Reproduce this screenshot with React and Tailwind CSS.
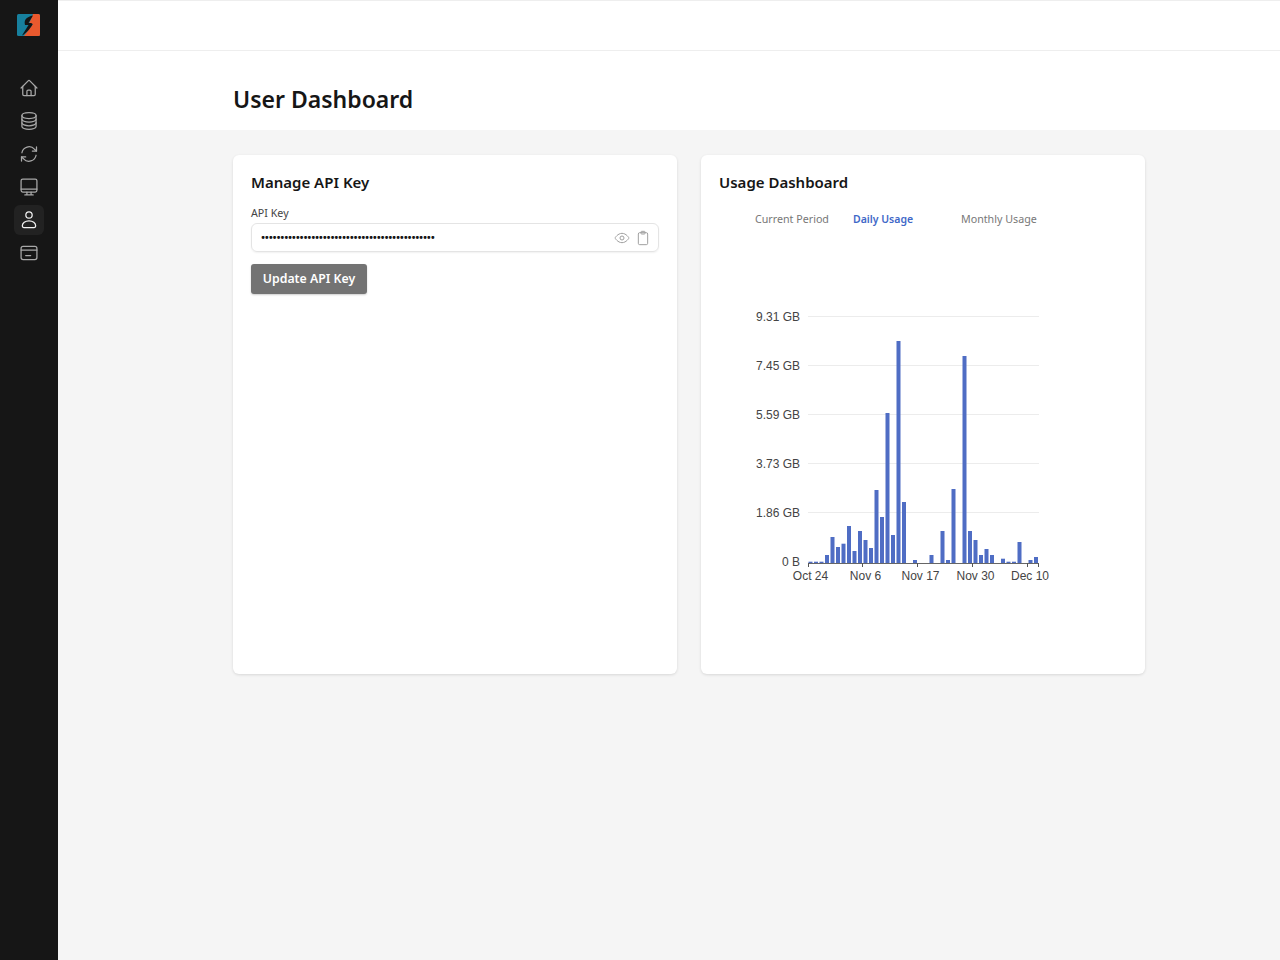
import React from "react";

const tops = [561.7,561.7,561.7,555,537,547,543.7,526,551,531,540,548,490,517,413,535,341,502,null,560,null,null,555,null,531,560,489,null,356,531,540,555,549,555,null,558.7,561.7,561.7,542,null,560,557];
const gridY = [316.5, 365.5, 414.5, 463.5, 512.5];
const yLabels = [["9.31 GB",320.5],["7.45 GB",369.5],["5.59 GB",418.5],["3.73 GB",467.5],["1.86 GB",516.5],["0 B",566]];
const xLabels = [["Oct 24",810.5],["Nov 6",865.5],["Nov 17",920.5],["Nov 30",975.5],["Dec 10",1030]];
const ticks = [808.5, 862.5, 917.5, 972.5, 1027.5, 1038.5];

function Chart() {
  return (
    <svg width="1280" height="960" viewBox="0 0 1280 960" className="absolute left-[-701px] top-[-155px] pointer-events-none">
      {gridY.map((y) => <line key={y} x1="808" x2="1039" y1={y} y2={y} stroke="#ececec" strokeWidth="1" />)}
      {tops.map((t, i) => t === null ? null : (
        <rect key={i} x={808.5 + 5.5 * i} y={t} width="4" height={563 - t} fill="#4f6dc4" />
      ))}
      <line x1="808" x2="1039" y1="563.5" y2="563.5" stroke="#666" strokeWidth="1" />
      {ticks.map((x) => <line key={x} x1={x} x2={x} y1="563" y2="567" stroke="#555" strokeWidth="1" />)}
      {yLabels.map(([t, y]) => <text key={t} x="800" y={y} textAnchor="end" fontFamily="Liberation Sans, Arial, sans-serif" fontSize="12" fill="#444">{t}</text>)}
      {xLabels.map(([t, x]) => <text key={t} x={x} y="580" textAnchor="middle" fontFamily="Liberation Sans, Arial, sans-serif" fontSize="12" fill="#444">{t}</text>)}
    </svg>
  );
}

const S = ({ children, active }) => (
  <svg width="20" height="20" viewBox="0 0 24 24" fill="none" stroke={active ? "#f2f2f2" : "#a8a8a8"} strokeWidth="1.5" strokeLinecap="round" strokeLinejoin="round">{children}</svg>
);

const Home = () => <S><path d="M2.5 12 11 3.4a1.4 1.4 0 0 1 2 0l8.5 8.6" /><path d="M4.5 10v9.5A1.5 1.5 0 0 0 6 21h12a1.5 1.5 0 0 0 1.5-1.5V10" /><path d="M9.5 21v-5a1.5 1.5 0 0 1 1.5-1.5h2a1.5 1.5 0 0 1 1.5 1.5v5" /></S>;
const Db = () => <S><ellipse cx="12" cy="5.5" rx="8.5" ry="3.5" /><path d="M3.5 5.5v13c0 1.9 3.8 3.5 8.5 3.5s8.5-1.6 8.5-3.5v-13" /><path d="M3.5 9.8c0 1.9 3.8 3.5 8.5 3.5s8.5-1.6 8.5-3.5" /><path d="M3.5 14.2c0 1.9 3.8 3.5 8.5 3.5s8.5-1.6 8.5-3.5" /></S>;
const Sync = () => <S><path d="M3.5 10.5a8.7 8.7 0 0 1 15-4.3L21 8.5" /><path d="M21 3.5v5h-5" /><path d="M20.5 13.5a8.7 8.7 0 0 1-15 4.3L3 15.5" /><path d="M3 20.5v-5h5" /></S>;
const Monitor = () => <S><rect x="2.5" y="2.5" width="19" height="15.5" rx="2" /><path d="M2.5 14.5h19" /><path d="M9.5 18v3.5M14.5 18v3.5M7 21.5h10" /></S>;
const User = () => <S active><circle cx="12" cy="6" r="3.8" /><path d="M12 13c-4.6 0-8 2.6-8 6v.3c0 1 .8 1.7 1.7 1.7h12.6c.9 0 1.7-.7 1.7-1.7V19c0-3.4-3.4-6-8-6Z" /></S>;
const Card = () => <S><rect x="2.5" y="4" width="19" height="16" rx="2.5" /><path d="M2.5 8.5h19" /><path d="M8 15h6" /></S>;

function Logo() {
  return (
    <svg width="23" height="22" viewBox="0 0 23 22" className="mr-[1px]">
      <rect width="23" height="22" rx="1.5" fill="#17809e" />
      <path d="M16 0H21.5A1.5 1.5 0 0 1 23 1.5V20.5A1.5 1.5 0 0 1 21.5 22H7L16 10H12Z" fill="#e9592e" />
      <path d="M16 1.5C13 2 10 3.5 8.5 5.5C7.5 7 7.5 9 8 11H11.5L5 21.5C9 19.5 13 15 15.5 10.5C15.5 10 15 9 14 9H11.5Z" fill="#141414" />
    </svg>
  );
}

const nav = [Home, Db, Sync, Monitor, User, Card];

export default function App() {
  return (
    <div className="flex min-h-[960px] bg-[#f5f5f5] font-['Noto_Sans','Open_Sans',sans-serif] text-[#161616]">
      <aside className="w-[58px] shrink-0 bg-[#161616] flex flex-col items-center pt-[14px]">
        <Logo />
        <nav className="mt-[37px] flex flex-col gap-[3px]">
          {nav.map((I, i) => (
            <div key={i} className={`w-[30px] h-[30px] flex items-center justify-center rounded-md ${i === 4 ? "bg-[#222222]" : ""}`}>
              <I />
            </div>
          ))}
        </nav>
      </aside>
      <main className="flex-1 min-w-0">
        <div className="h-[51px] bg-white border-b border-t border-[#eeeeee]" />
        <div className="h-[79px] bg-white pl-[175px] pt-[32px]">
          <h1 className="text-[23px] leading-[32px] font-semibold">User Dashboard</h1>
        </div>
        <div className="pl-[175px] pt-[25px] flex gap-[24px]">
          <section className="w-[444px] h-[519px] bg-white rounded-md shadow-[0_1px_3px_rgba(0,0,0,0.12)] px-[18px] pt-[17px]">
            <h2 className="text-[15px] leading-[20px] font-semibold">Manage API Key</h2>
            <div className="mt-[13px] text-[10.7px] leading-[16px] text-[#444]">API Key</div>
            <div className="mt-[2px] h-[29px] rounded-md border border-[#e4e4e4] shadow-[0_1px_2px_rgba(0,0,0,0.06)] flex items-center pl-[9px] pr-[7px]">
              <span className="flex-1 -mt-[2px] text-[11px] leading-none tracking-[-0.28px] text-[#161616] font-semibold">{"•".repeat(45)}</span>
              <svg width="16" height="16" viewBox="0 0 24 24" fill="none" stroke="#a0a0a0" strokeWidth="1.5"><path d="M1.5 12S5.5 5 12 5s10.5 7 10.5 7-4 7-10.5 7S1.5 12 1.5 12Z" /><circle cx="12" cy="12" r="3" /></svg>
              <svg className="ml-[5px]" width="16" height="16" viewBox="0 0 24 24" fill="none" stroke="#a0a0a0" strokeWidth="1.5" strokeLinejoin="round"><rect x="5" y="4" width="14" height="18" rx="2" /><rect x="9" y="2" width="6" height="4" rx="1" /></svg>
            </div>
            <button className="mt-[12px] block w-[116px] h-[30px] rounded-[3px] bg-[#737373] text-white text-[12.3px] font-semibold shadow-[0_1px_2px_rgba(0,0,0,0.2)]">Update API Key</button>
          </section>
          <section className="relative w-[444px] h-[519px] bg-white rounded-md shadow-[0_1px_3px_rgba(0,0,0,0.12)] px-[18px] pt-[17px]">
            <h2 className="text-[15px] leading-[20px] font-semibold">Usage Dashboard</h2>
            <div className="mt-[19px] h-[16px] pl-[36px] flex text-[10.7px] leading-[16px] text-[#777]">
              <span className="w-[98px]">Current Period</span>
              <span className="w-[108px] text-[#3f68c8] text-[10.5px] font-semibold">Daily Usage</span>
              <span>Monthly Usage</span>
            </div>
            <Chart />
          </section>
        </div>
      </main>
    </div>
  );
}
